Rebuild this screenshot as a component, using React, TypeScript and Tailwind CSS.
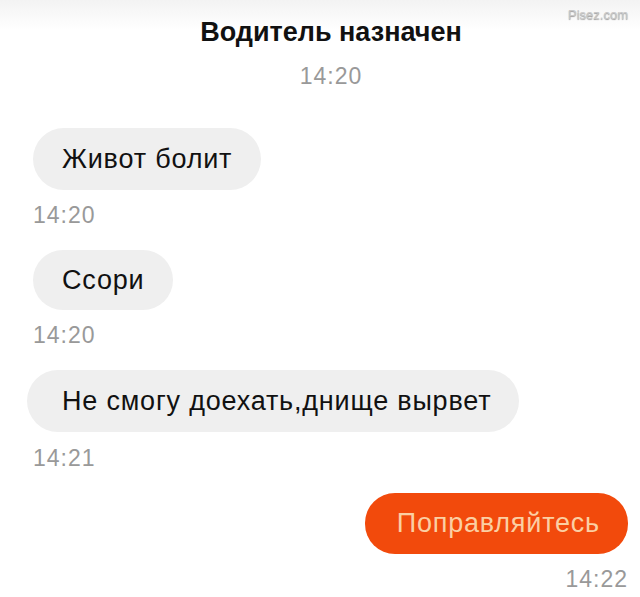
export default function App() {
  const font = { fontFamily: "'Liberation Sans', Arial, sans-serif" };
  return (
    <div className="relative h-[597px] w-[640px] overflow-hidden bg-white" style={font}>
      <div className="absolute left-0 top-0 h-[30px] w-full bg-gradient-to-b from-[#f3f3f3] to-white" />
      <span className="absolute right-[12px] top-[5px] text-[13px] text-[#c8c8c8] [text-shadow:0_1px_1px_#999]">
        Pisez.com
      </span>

      <div className="relative flex flex-col">
        <div className="flex flex-col items-center pl-[22px]">
          <h1 className="mt-[16px] text-[27px] font-bold leading-[32px] text-[#111]">Водитель назначен</h1>
          <div className="mt-[15px] text-[23px] leading-[26px] tracking-[1px] text-[#999]">14:20</div>
        </div>

        <div className="mt-[39px] flex flex-col items-start pl-[33px]">
          <div className="flex h-[62px] items-center rounded-[31px] bg-[#efefef] px-[29px] text-[27px] tracking-[0.8px] text-[#111]">
            Живот болит
          </div>
          <div className="mt-[12px] text-[23px] leading-[26px] tracking-[1px] text-[#999]">14:20</div>

          <div className="mt-[22px] flex h-[60px] items-center rounded-[30px] bg-[#efefef] px-[29px] text-[27px] tracking-[0.8px] text-[#111]">
            Ссори
          </div>
          <div className="mt-[12px] text-[23px] leading-[26px] tracking-[1px] text-[#999]">14:20</div>
        </div>

        <div className="mt-[22px] flex flex-col items-start pl-[27px]">
          <div className="flex h-[62px] items-center rounded-[31px] bg-[#efefef] pl-[35px] pr-[28px] text-[27px] tracking-[0.8px] text-[#111]">
            Не смогу доехать,днище вырвет
          </div>
          <div className="mt-[13px] pl-[6px] text-[23px] leading-[26px] tracking-[1px] text-[#999]">14:21</div>
        </div>

        <div className="mt-[22px] flex flex-col items-end pr-[12px]">
          <div className="flex h-[61px] items-center rounded-[30px] bg-[#f24a0c] pl-[32px] pr-[28px] text-[27px] tracking-[0.8px] text-[#fbcfa3]">
            Поправляйтесь
          </div>
          <div className="mt-[12px] text-[23px] leading-[26px] tracking-[1px] text-[#999]">14:22</div>
        </div>
      </div>
    </div>
  );
}
